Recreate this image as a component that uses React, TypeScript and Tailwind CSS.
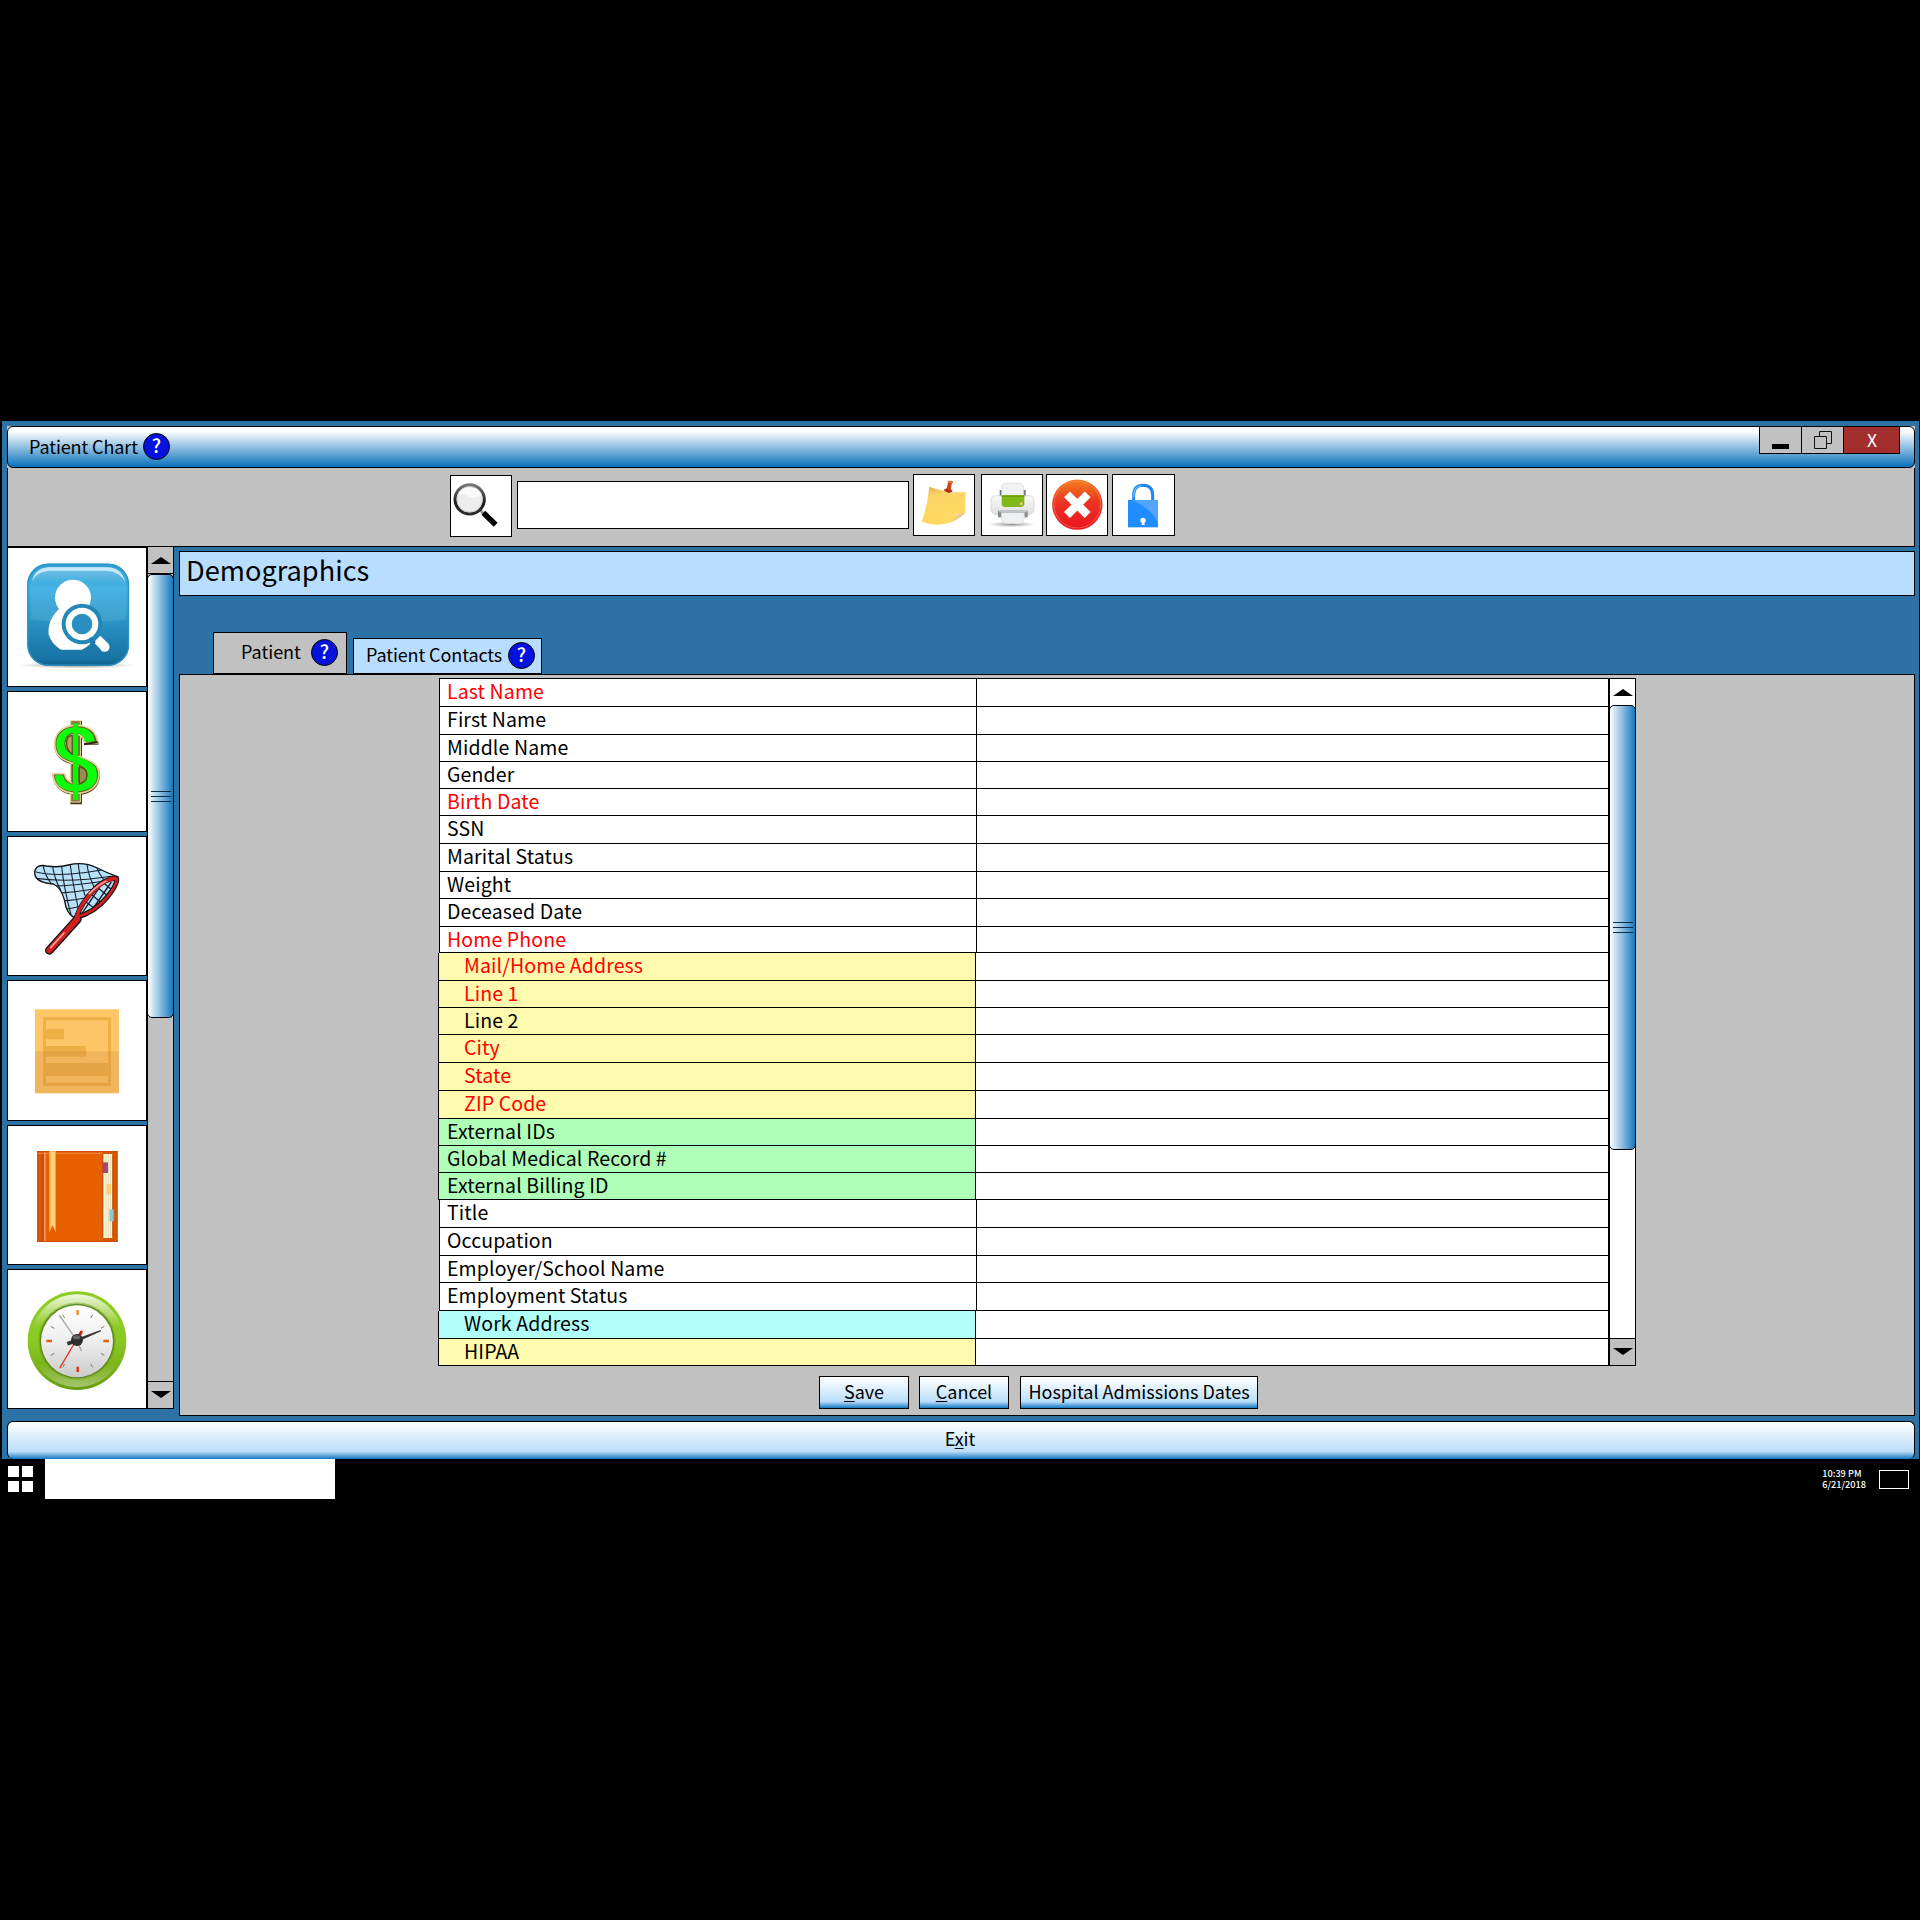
import type { ReactNode } from "react";

type Tone = "plain" | "yellow" | "green" | "cyan";

type Row = { label: string; h: 26 | 27 | 28; required?: boolean; indent?: boolean; tone?: Tone };

const rows: Row[] = [
  { label: "Last Name", h: 28, required: true },
  { label: "First Name", h: 28 },
  { label: "Middle Name", h: 27 },
  { label: "Gender", h: 27 },
  { label: "Birth Date", h: 27, required: true },
  { label: "SSN", h: 28 },
  { label: "Marital Status", h: 28 },
  { label: "Weight", h: 27 },
  { label: "Deceased Date", h: 28 },
  { label: "Home Phone", h: 26, required: true },
  { label: "Mail/Home Address", h: 28, required: true, indent: true, tone: "yellow" },
  { label: "Line 1", h: 27, required: true, indent: true, tone: "yellow" },
  { label: "Line 2", h: 27, indent: true, tone: "yellow" },
  { label: "City", h: 28, required: true, indent: true, tone: "yellow" },
  { label: "State", h: 28, required: true, indent: true, tone: "yellow" },
  { label: "ZIP Code", h: 28, required: true, indent: true, tone: "yellow" },
  { label: "External IDs", h: 27, tone: "green" },
  { label: "Global Medical Record #", h: 27, tone: "green" },
  { label: "External Billing ID", h: 27, tone: "green" },
  { label: "Title", h: 28 },
  { label: "Occupation", h: 28 },
  { label: "Employer/School Name", h: 27 },
  { label: "Employment Status", h: 28 },
  { label: "Work Address", h: 28, indent: true, tone: "cyan" },
  { label: "HIPAA", h: 27, indent: true, tone: "yellow" },
];

const heights = { 26: "h-[26px]", 27: "h-[27px]", 28: "h-[28px]" };
const insets = { 26: "pb-[2px]", 27: "pb-[3px]", 28: "pb-[4px]" };
const tones: Record<Tone, string> = {
  plain: "bg-white",
  yellow: "bg-[#fffaae]",
  green: "bg-[#b0ffb9]",
  cyan: "bg-[#b0fffa]",
};

function Help() {
  return (
    <span className="flex h-[27px] w-[27px] shrink-0 items-center justify-center rounded-full border border-black bg-[#0512dc] text-[19px] leading-[20px] font-medium text-white">
      <span className="-mt-[3px]">?</span>
    </span>
  );
}

function Arrow({ down }: { down?: boolean }) {
  return (
    <svg viewBox="0 0 20 7" className={down ? "h-[7px] w-5 rotate-180" : "h-[7px] w-5"}>
      <path d="M0 7 L10 0 L20 7 Z" fill="#000" />
    </svg>
  );
}

function Grip() {
  return (
    <div className="flex w-5 flex-col gap-[4px]">
      <i className="h-px bg-[#0b2c46]" />
      <i className="h-px bg-[#0b2c46]" />
      <i className="h-px bg-[#0b2c46]" />
    </div>
  );
}

function UserSearchIcon() {
  return (
    <svg viewBox="24 24 414 414" className="block h-[138px] w-[138px]">
      <defs>
        <linearGradient id="us1" x1="0" y1="0" x2="0" y2="1">
          <stop offset="0" stopColor="#2f9fd2" />
          <stop offset=".25" stopColor="#3fb0e4" />
          <stop offset=".5" stopColor="#2f9acb" />
          <stop offset=".8" stopColor="#1c7dae" />
          <stop offset=".93" stopColor="#1874a4" />
          <stop offset="1" stopColor="#0f5f88" />
        </linearGradient>
        <linearGradient id="us2" x1="0" y1="0" x2="0" y2="1">
          <stop offset="0" stopColor="#fff" stopOpacity=".35" />
          <stop offset=".3" stopColor="#fff" stopOpacity=".03" />
          <stop offset="1" stopColor="#fff" stopOpacity=".1" />
        </linearGradient>
        <radialGradient id="us3">
          <stop offset="0" stopColor="#553" stopOpacity=".75" />
          <stop offset="1" stopColor="#999" stopOpacity="0" />
        </radialGradient>
      </defs>
      <ellipse cx="230" cy="376" rx="180" ry="10" fill="url(#us3)" />
      <rect x="82" y="71" width="305" height="306" rx="62" fill="url(#us1)" />
      <rect x="83.500" y="72.500" width="302" height="303" rx="61" fill="none" stroke="#2a93c4" strokeWidth="4" />
      <path d="M93 238 V142 Q94 82 150 81 H320 Q377 82 378 142 V238 Q235 258 93 238Z" fill="url(#us2)" />
      <path d="M96 125 Q104 83 150 82 H320 Q366 83 376 128 Q362 94 318 92 H154 Q108 94 96 125Z" fill="#d6f0fc" opacity=".85" />
      <circle cx="219" cy="173" r="54" fill="#fff" />
      <path d="M183 203 C155 222 142 258 146 283 C154 308 168 320 183 329 H246 Q262 321 270 312 L262 210 Z" fill="#fff" />
      <circle cx="246" cy="252" r="61" fill="#2487b8" />
      <circle cx="246" cy="252" r="40" fill="#2a8fc2" stroke="#fff" strokeWidth="18" />
      <path d="M291 297 L314 320" stroke="#fff" strokeWidth="28" />
      <circle cx="314" cy="321" r="14.500" fill="#fff" />
      <path d="M269 294 L285 309" stroke="#1d7bac" strokeWidth="8" />
    </svg>
  );
}

function DollarIcon() {
  const s =
    "M293 609 H255 C251 592 242 583 228 583 C210 583 199 594 199 610 C199 628 213 638 240 650 C276 663 297 673 297 702 C297 738 270 760 228 760 C188 760 162 739 158 701 H193 C197 719 208 730 227 730 C245 730 254 721 254 706 C254 690 243 680 215 669 C180 657 164 642 164 612 C164 578 190 556 228 556 C264 556 290 573 293 609 Z";
  return (
    <svg viewBox="24 456 414 417" className="block h-[139px] w-[138px]">
      <g strokeLinejoin="round">
        <g transform="translate(1 3)" fill="#4a3a12" stroke="#4a3a12" strokeWidth="4">
          <path d={s} />
          <path d="M212 541 H243 V788 H212Z" />
        </g>
        <path d="M212 542 H241 V786 H212Z" fill="#8a763a" stroke="#efe5b4" strokeWidth="3" />
        <path d={s} fill="#6e5c2d" stroke="#e3d79c" strokeWidth="5" />
        <path
          d="M281 602 H257 C253 582 240 575 225 575 C203 575 190 590 190 610 C190 632 206 643 232 653 C270 667 288 677 288 704 C288 734 266 751 228 751 C193 751 172 736 168 709 H186 C191 728 207 738 229 738 C252 738 265 724 265 704 C265 683 248 674 220 663 C186 651 172 640 172 612 C172 583 194 565 228 565 C259 565 277 578 281 602 Z"
          fill="#0bff0b"
          stroke="#0bff0b"
          strokeWidth="6"
        />
        <path d="M200 610 C199 596 206 587 217 586 V643 C206 636 200 626 200 610Z" fill="#b5a568" stroke="#5a4a20" strokeWidth="4" />
        <path d="M238 680 C253 684 261 692 261 705 C261 719 253 728 238 731Z" fill="#9c8a50" stroke="#5a4a20" strokeWidth="4" />
        <path d="M219 550 H235 V780 H219Z" fill="#08f508" />
        <path d="M217 587 V642 M237 587 V648 M217 672 V731 M237 682 V730" stroke="#4f6a1c" strokeWidth="3" />
        <path d="M252 613 L293 606" stroke="#33260b" strokeWidth="6" />
      </g>
    </svg>
  );
}

function NetIcon() {
  return (
    <svg viewBox="24 21 414 414" className="block h-[138px] w-[138px]">
      <defs>
        <clipPath id="net">
          <path d="M104 130 C104 108 122 104 140 108 C165 112 185 111 205 105 C240 96 268 102 292 114 C312 124 330 132 352 140 L300 165 L235 240 L222 263 C205 253 197 238 194 212 C188 190 178 170 160 162 C135 160 106 153 104 130Z" />
        </clipPath>
        <clipPath id="hoop">
          <path d="M234 260 Q246 222 288 180 Q322 150 346 150 Q348 166 318 200 Q282 242 234 260Z" />
        </clipPath>
      </defs>
      <path d="M104 130 C104 108 122 104 140 108 C165 112 185 111 205 105 C240 96 268 102 292 114 C312 124 330 132 352 140 L300 165 L235 240 L222 263 C205 253 197 238 194 212 C188 190 178 170 160 162 C135 160 106 153 104 130Z" fill="#b9e1fa" stroke="#111" strokeWidth="4" />
      <g clipPath="url(#net)" fill="none" stroke="#15202a" strokeWidth="3.200">
        <path d="M100 124 Q180 148 345 112 M100 144 Q200 160 340 138 M130 168 Q220 170 330 150 M150 190 Q220 190 310 172 M170 214 Q230 212 290 196 M180 240 Q225 236 270 220" />
        <path d="M128 100 Q134 140 160 168 M156 100 Q164 150 182 180 M184 100 Q190 170 215 262 M210 98 Q216 150 236 240 M234 96 Q240 160 262 215 M260 96 Q264 140 290 185 M286 98 Q292 130 325 165" />
      </g>
      <path d="M234 260 Q246 222 288 180 Q322 150 346 150 Q348 166 318 200 Q282 242 234 260Z" fill="#b9e1fa" />
      <g clipPath="url(#hoop)" stroke="#15202a" strokeWidth="4">
        <path d="M250 210 L290 240 M270 190 L308 222 M292 172 L326 200 M312 160 L340 184 M246 250 L296 176 M272 246 L334 156" />
      </g>
      <path d="M230 261 Q241 220 288 173 Q322 143 350 146 Q353 162 321 202 Q283 248 230 261Z" fill="none" stroke="#111" strokeWidth="15" strokeLinejoin="round" />
      <path d="M232 268 L148 361" stroke="#111" strokeWidth="26" strokeLinecap="round" />
      <path d="M232 268 L148 361" stroke="#cf1f1f" strokeWidth="18" strokeLinecap="round" />
      <path d="M230 261 Q241 220 288 173 Q322 143 350 146 Q353 162 321 202 Q283 248 230 261Z" fill="none" stroke="#cf1f1f" strokeWidth="8" strokeLinejoin="round" />
      <path d="M230 258 Q243 218 288 175 Q320 146 344 145" fill="none" stroke="#cf1f1f" strokeWidth="11" strokeLinecap="round" />
      <path d="M152 353 L192 309 M268 191 Q294 165 318 154" fill="none" stroke="#f4a3a3" strokeWidth="5" strokeLinecap="round" />
    </svg>
  );
}

function FormIcon() {
  return (
    <svg viewBox="24 453 414 417" className="block h-[139px] w-[138px]">
      <rect x="105" y="538" width="252" height="252" rx="3" fill="#fec666" />
      <path d="M129 562 H333 V768 H129Z M138 571 V597 H192 V628 H138 V648 H258 V680 H138 V699 H324 V571Z M138 738 V758 H324 V738Z" fill="#eeaf44" fillRule="evenodd" />
      <path d="M105 663 H357 V787 Q357 790 354 790 H108 Q105 790 105 787Z" fill="#d2893f" opacity=".28" />
    </svg>
  );
}

function BookIcon() {
  return (
    <svg viewBox="24 18 414 414" className="block h-[138px] w-[138px]">
      <rect x="111" y="93" width="242" height="273" rx="3" fill="#e66000" />
      <rect x="111" y="93" width="14" height="273" fill="#d85a08" />
      <rect x="125" y="93" width="6" height="273" fill="#c64d10" />
      <rect x="132" y="96" width="5" height="267" fill="#f2955f" />
      <rect x="308" y="93" width="45" height="273" fill="#d65600" />
      <path d="M111 94.500 H353 M111 364 H353" stroke="#cf4c08" strokeWidth="3" />
      <path d="M114 100 H308" stroke="#f48a45" strokeWidth="3" />
      <path d="M148 94 H168 V336 L157 316 L148 336Z" fill="#ffd075" />
      <path d="M148 94 H151 V332 L148 336Z M165 94 H168 V336 L165 330Z" fill="#eaa24c" />
      <rect x="307" y="100" width="4" height="255" fill="#b94a0c" />
      <rect x="310" y="102" width="27" height="252" fill="#fdf6d8" />
      <path d="M318 102 V354 M325 102 V354 M331 102 V354" stroke="#d8cba0" strokeWidth="2" />
      <rect x="309" y="127" width="15" height="32" fill="#a4487f" />
      <rect x="320" y="192" width="13" height="31" fill="#ffcf73" />
      <rect x="328" y="268" width="13" height="36" fill="#86c9d8" />
      <path d="M339 104 V268 M339 304 V352" stroke="#b94a0c" strokeWidth="3" />
    </svg>
  );
}

function ClockIcon() {
  return (
    <svg viewBox="24 450 414 414" className="block h-[138px] w-[138px]">
      <defs>
        <linearGradient id="ck1" x1="0" y1="0" x2="0" y2="1">
          <stop offset="0" stopColor="#8fcc22" />
          <stop offset=".5" stopColor="#8bc926" />
          <stop offset=".85" stopColor="#75ab13" />
          <stop offset="1" stopColor="#659c0c" />
        </linearGradient>
        <linearGradient id="ck2" x1="0" y1="0" x2="0" y2="1">
          <stop offset="0" stopColor="#fff" />
          <stop offset=".5" stopColor="#eee" />
          <stop offset="1" stopColor="#cbcbcb" />
        </linearGradient>
        <linearGradient id="ck3" x1="0" y1="0" x2="0" y2="1">
          <stop offset="0" stopColor="#fff" stopOpacity=".85" />
          <stop offset=".35" stopColor="#fff" stopOpacity="0" />
          <stop offset=".75" stopColor="#fff" stopOpacity="0" />
          <stop offset="1" stopColor="#fff" stopOpacity=".4" />
        </linearGradient>
      </defs>
      <circle cx="231" cy="662" r="148" fill="url(#ck1)" />
      <circle cx="231" cy="662" r="139" fill="url(#ck3)" />
      <circle cx="231" cy="663" r="116" fill="#5c8d12" opacity=".35" />
      <circle cx="231" cy="663" r="112" fill="#4c7a0c" opacity=".7" />
      <circle cx="231" cy="664" r="108" fill="url(#ck2)" />
      <path d="M233 570 V585" stroke="#f08a1c" strokeWidth="7" />
      <path d="M139 663 H156 M310 663 H327" stroke="#e85c16" strokeWidth="7" />
      <path d="M233 740 V756" stroke="#dc2c0c" strokeWidth="7" />
      <path d="M278 584 L272 594 M313 619 L303 625 M152 619 L163 625 M313 706 L303 700 M152 706 L163 700 M278 742 L272 732 M188 742 L194 732 M188 584 L194 594" stroke="#6d8c4a" strokeWidth="3" />
      <path d="M178 586 L228 656 L244 692" stroke="#999" strokeWidth="5" fill="none" opacity=".8" />
      <path d="M186 592 L228 652" stroke="#fff" strokeWidth="2" />
      <path d="M180 743 L238 645" stroke="#dc3c14" strokeWidth="4" strokeLinecap="round" />
      <path d="M236 650 L244 636" stroke="#cc2410" strokeWidth="9" strokeLinecap="round" />
      <path d="M230 656 L302 630 L303 634 L236 664Z" fill="#333" />
      <path d="M229 662 L202 671" stroke="#333" strokeWidth="11" />
      <circle cx="231" cy="660" r="18" fill="#2e2e2e" />
      <ellipse cx="230" cy="652" rx="11" ry="6" fill="#666" />
    </svg>
  );
}

function MagnifierIcon() {
  return (
    <svg viewBox="63 48 180 180" className="block h-[60px] w-[60px]">
      <defs>
        <linearGradient id="mg1" x1="0" y1="0" x2="0" y2="1">
          <stop offset="0" stopColor="#777" />
          <stop offset=".6" stopColor="#1c1c1c" />
          <stop offset="1" stopColor="#2c2c2c" />
        </linearGradient>
      </defs>
      <path d="M148 148 L162 162" stroke="#999" strokeWidth="9" />
      <path d="M160 158 L197 194" stroke="#000" strokeWidth="17" />
      <circle cx="119" cy="118" r="44" fill="#e4e4e4" stroke="url(#mg1)" strokeWidth="9" />
      <circle cx="119" cy="118" r="38" fill="#ededed" stroke="#bbb" strokeWidth="2" />
      <path d="M84 106 Q92 82 119 82 Q148 84 154 106 Q140 116 119 112 Q100 96 84 106Z" fill="#fafafa" />
    </svg>
  );
}

function NoteIcon() {
  return (
    <svg viewBox="282 45 180 180" className="block h-[60px] w-[60px]">
      <defs>
        <linearGradient id="nt1" x1="0" y1="0" x2=".3" y2="1">
          <stop offset="0" stopColor="#e2ae45" />
          <stop offset=".3" stopColor="#fbd468" />
          <stop offset="1" stopColor="#ffd95f" />
        </linearGradient>
        <linearGradient id="nt2" x1="0" y1="0" x2="1" y2="1">
          <stop offset="0" stopColor="#fff3c4" />
          <stop offset="1" stopColor="#e8963a" />
        </linearGradient>
      </defs>
      <path d="M328 80 Q380 100 438 96 Q434 130 437 158 Q420 172 393 187 Q350 202 305 185 Q322 140 328 80Z" fill="url(#nt1)" />
      <path d="M372 94 Q395 108 425 97 L395 96Z" fill="#f6dc9c" />
      <path d="M393 187 Q408 174 406 158 Q424 164 437 157 Q422 174 393 187Z" fill="url(#nt2)" />
      <path d="M384 66 Q392 60 400 66 L395 72 L393 86 L398 94 Q385 104 371 90 L380 84 L383 73Z" fill="#d2441c" />
      <path d="M372 90 Q384 86 397 94 Q386 104 372 90Z" fill="#a82c0c" />
      <ellipse cx="391" cy="66" rx="8" ry="4" fill="#e86a3a" />
    </svg>
  );
}

function PrinterIcon() {
  return (
    <svg viewBox="485 45 180 180" className="block h-[60px] w-[60px]">
      <defs>
        <radialGradient id="pr1">
          <stop offset="0" stopColor="#555" stopOpacity=".7" />
          <stop offset="1" stopColor="#888" stopOpacity="0" />
        </radialGradient>
        <linearGradient id="pr2" x1="0" y1="0" x2="0" y2="1">
          <stop offset="0" stopColor="#fafafa" />
          <stop offset="1" stopColor="#dedede" />
        </linearGradient>
      </defs>
      <ellipse cx="574" cy="193" rx="72" ry="9" fill="url(#pr1)" />
      <path d="M538 90 H616 V112 H538Z" fill="#6c7074" />
      <path d="M544 108 V80 Q545 70 556 70 H598 Q608 70 610 80 V108Z" fill="#f0f2f3" stroke="#d4d8da" strokeWidth="2" />
      <path d="M526 107 H628 Q641 108 641 124 V146 Q640 164 622 165 L616 152 H540 L532 165 Q512 162 512 146 V124 Q512 108 526 107Z" fill="url(#pr2)" stroke="#cbcbcb" strokeWidth="2" />
      <path d="M544 106 H612 V134 Q610 141 603 141 H552 Q544 140 544 133Z" fill="#83b81a" />
      <path d="M544 106 H612 V111 H544Z" fill="#6ea010" />
      <circle cx="603" cy="131" r="4" fill="#f5cf7a" />
      <path d="M533 152 H622 V172 H533Z" fill="#83878a" />
      <path d="M543 158 H612 V176 Q608 191 596 191 H560 Q547 190 543 178Z" fill="#eef0f1" stroke="#d0d4d6" strokeWidth="2" />
      <path d="M536 151 H620 V157 H536Z" fill="#c2c4c5" />
    </svg>
  );
}

function CancelIcon() {
  return (
    <svg viewBox="681 45 180 180" className="block h-[60px] w-[60px]">
      <defs>
        <linearGradient id="cn1" x1="0" y1="0" x2="0" y2="1">
          <stop offset="0" stopColor="#f4801c" />
          <stop offset=".45" stopColor="#ec3423" />
          <stop offset="1" stopColor="#ea1522" />
        </linearGradient>
      </defs>
      <circle cx="772" cy="134" r="75.500" fill="url(#cn1)" />
      <circle cx="772" cy="134" r="70" fill="none" stroke="#f79368" strokeWidth="2" opacity=".8" />
      <path d="M741 103 L803 165 M803 103 L741 165" stroke="#fff" strokeWidth="25" strokeLinejoin="round" />
    </svg>
  );
}

function LockIcon() {
  return (
    <svg viewBox="879 45 183 180" className="block h-[60px] w-[61px]">
      <path d="M941 122 V105 Q941 77 969 76 Q998 77 998 105 V122" fill="none" stroke="#1f87f5" strokeWidth="9" />
      <path d="M941 112 V104 Q942 80 966 77" fill="none" stroke="#6db8fb" strokeWidth="4" />
      <rect x="924" y="120" width="90" height="82" fill="#1f8dff" />
      <path d="M936 120 H1014 V190 Q1000 150 936 120Z" fill="#55a4fb" />
      <circle cx="969" cy="181" r="8" fill="#fff" />
      <path d="M966 184 H973 L974 195 H965Z" fill="#fff" />
    </svg>
  );
}

function ToolButton({ children, className = "w-[62px]" }: { children: ReactNode; className?: string }) {
  return <button className={"h-[62px] shrink-0 border border-black bg-white " + className}>{children}</button>;
}

function GlossButton({ children, className }: { children: ReactNode; className: string }) {
  return (
    <button
      className={
        "flex h-[33px] shrink-0 items-center justify-center border border-black bg-[linear-gradient(#ffffff,#c3e3fb_70%,#b5dcf9_80%,#1478c0)] pb-[4px] whitespace-nowrap " +
        className
      }
    >
      {children}
    </button>
  );
}

function DemographicsTable() {
  return (
    <div className="w-[1170px] border-t border-black text-[19.5px] tracking-[0.12px]">
      {rows.map((r) => (
        <div
          key={r.label}
          className={"flex border-x border-b border-black bg-white " + heights[r.h] + (r.tone ? " -ml-px" : "")}
        >
          <div
            className={
              "flex w-[537px] shrink-0 items-center border-r border-black " +
              insets[r.h] +
              " " +
              tones[r.tone ?? "plain"] +
              (r.indent ? " pl-[25px]" : r.tone ? " pl-[8px]" : " pl-[7px]") +
              (r.required ? " text-[#ff0000]" : "")
            }
          >
            {r.label}
          </div>
          <div className="flex-1" />
        </div>
      ))}
    </div>
  );
}

export default function App() {
  const sidebar = [
    { icon: <UserSearchIcon />, size: "h-[140px]" },
    { icon: <DollarIcon />, size: "h-[141px]" },
    { icon: <NetIcon />, size: "h-[140px]" },
    { icon: <FormIcon />, size: "h-[141px]" },
    { icon: <BookIcon />, size: "h-[140px]" },
    { icon: <ClockIcon />, size: "h-[140px]" },
  ];

  return (
    <div className="h-[1920px] w-[1920px] overflow-hidden bg-black pt-[421px] font-['Noto_Sans_CJK_SC','Noto_Sans',sans-serif] text-[18px] leading-[24px] text-black">
      <div className="ml-[2px] flex h-[1038px] w-[1917px] flex-col bg-[#2d72a5] pt-[5px] pr-[4px] pl-[5px]">
        <header className="bg-[#c1c1c1]">
          <div className="flex h-[42px] items-start rounded-[6px] border border-black bg-[linear-gradient(#ffffff_10%,#1478c0_96%)]">
            <div className="flex h-[39px] flex-1 items-center gap-[5px] pl-[21px]">
              <span className="pb-[2px] tracking-[-0.1px]">Patient Chart</span>
              <Help />
            </div>
            <div className="-mt-px mr-[14px] flex">
              <button className="flex h-[28px] w-[43px] items-end justify-center border border-black bg-[#c1c1c1] pr-px pb-[4px]">
                <span className="h-[5px] w-[17px] bg-black" />
              </button>
              <button className="-ml-px flex h-[28px] w-[43px] items-center justify-center border border-black bg-[#c1c1c1]">
                <svg viewBox="0 0 18 18" className="h-[18px] w-[18px]" fill="#c1c1c1" stroke="#111">
                  <path d="M5.500 .5 H17.500 V12.500 H5.500Z" />
                  <path d="M.5 5.500 H12.500 V17.500 H.5Z" />
                </svg>
              </button>
              <button className="-ml-px flex h-[28px] w-[57px] items-center justify-center border border-black bg-[#a22e2e] pb-px pl-px text-[17.5px] text-white">
                X
              </button>
            </div>
          </div>
          <div className="flex h-[79px] border-x border-b border-black pt-[6px] pl-[442px]">
            <ToolButton className="mt-px w-[62px]">
              <MagnifierIcon />
            </ToolButton>
            <div className="mt-[7px] ml-[5px] h-[48px] w-[392px] border border-black bg-white" />
            <ToolButton className="ml-[4px] w-[62px]">
              <NoteIcon />
            </ToolButton>
            <ToolButton className="ml-[6px] w-[62px]">
              <PrinterIcon />
            </ToolButton>
            <ToolButton className="ml-[3px] w-[62px]">
              <CancelIcon />
            </ToolButton>
            <ToolButton className="ml-[4px] w-[63px]">
              <LockIcon />
            </ToolButton>
          </div>
        </header>

        <div className="flex h-[874px]">
          <nav className="flex w-[140px] flex-col gap-[4px]">
            {sidebar.map((t) => (
              <button key={t.icon.type.name} className={"w-[140px] shrink-0 border border-black bg-white " + t.size}>
                {t.icon}
              </button>
            ))}
          </nav>
          <div className="flex h-[862px] w-[27px] flex-col border-x border-b border-black bg-[#c1c1c1]">
            <div className="flex h-[27px] items-center justify-center border-b border-black">
              <Arrow />
            </div>
            <div className="-mx-px flex h-[444px] items-center justify-center rounded-[5px] border border-black bg-[linear-gradient(to_right,#ffffff,#1478c0)]">
              <Grip />
            </div>
            <div className="flex-1" />
            <div className="flex h-[27px] items-center justify-center border-t border-black pb-px">
              <Arrow down />
            </div>
          </div>

          <main className="ml-[5px] flex flex-1 flex-col">
            <h1 className="mt-[4px] flex h-[45px] items-center border border-black bg-[#b9ddff] pb-[9px] pl-[6px] text-[27.2px] leading-[34px]">
              Demographics
            </h1>
            <div className="flex h-[78px] items-end pl-[34px]">
              <div className="flex h-[42px] w-[134px] items-center justify-between border border-black bg-[#c1c1c1] pr-[8px] pb-[2px] pl-[27px] whitespace-nowrap">
                <span className="pb-[2px]">Patient</span>
                <Help />
              </div>
              <div className="ml-[6px] flex h-[36px] w-[189px] items-center justify-between border border-black bg-[#b9ddff] pr-[6px] pb-px pl-[12px] whitespace-nowrap">
                <span className="pb-[3px] tracking-[-0.1px]">Patient Contacts</span>
                <Help />
              </div>
            </div>
            <section className="h-[742px] border border-black bg-[#c1c1c1] pt-[3px]">
              <div className="ml-[259px] flex">
                <DemographicsTable />
                <div className="-ml-px flex h-[688px] w-[28px] flex-col border border-l-2 border-black bg-white">
                  <div className="flex h-[26px] items-center justify-center pl-px">
                    <Arrow />
                  </div>
                  <div className="-mx-px flex h-[445px] items-center justify-center rounded-[5px] border border-black bg-[linear-gradient(to_right,#ffffff,#1478c0)] pl-px">
                    <Grip />
                  </div>
                  <div className="flex-1" />
                  <div className="flex h-[27px] items-center justify-center border-t border-black bg-[#c1c1c1] pb-[2px] pl-px">
                    <Arrow down />
                  </div>
                </div>
              </div>
              <div className="mt-[10px] ml-[639px] flex">
                <GlossButton className="w-[90px]">
                  <span>
                    <u className="underline-offset-2">S</u>ave
                  </span>
                </GlossButton>
                <GlossButton className="ml-[10px] w-[90px]">
                  <span>
                    <u className="underline-offset-2">C</u>ancel
                  </span>
                </GlossButton>
                <GlossButton className="ml-[11px] w-[238px]">Hospital Admissions Dates</GlossButton>
              </div>
            </section>
          </main>
        </div>

        <button className="flex h-[38px] items-center justify-center rounded-[6px] border border-b-0 border-black bg-[linear-gradient(#ffffff,#b9ddf9_80%,#1478c0)] pr-[2px] pb-[5px]">
          <span>
            E<u className="underline-offset-2">x</u>it
          </span>
        </button>
      </div>

      <footer className="flex h-[40px] items-start">
        <div className="ml-[8px] grid grid-cols-2 gap-x-[3px] gap-y-[4px] pt-[7px]">
          <i className="h-[11px] w-[11px] bg-white" />
          <i className="h-[11px] w-[11px] bg-white" />
          <i className="h-[11px] w-[11px] bg-white" />
          <i className="h-[11px] w-[11px] bg-white" />
        </div>
        <div className="ml-[12px] h-[40px] w-[290px] bg-white" />
        <div className="ml-auto pt-[9px] text-[9.2px] leading-[11px] font-medium text-white">
          <div>10:39 PM</div>
          <div>6/21/2018</div>
        </div>
        <div className="mt-[11px] mr-[11px] ml-[13px] h-[19px] w-[30px] border border-white" />
      </footer>
    </div>
  );
}
